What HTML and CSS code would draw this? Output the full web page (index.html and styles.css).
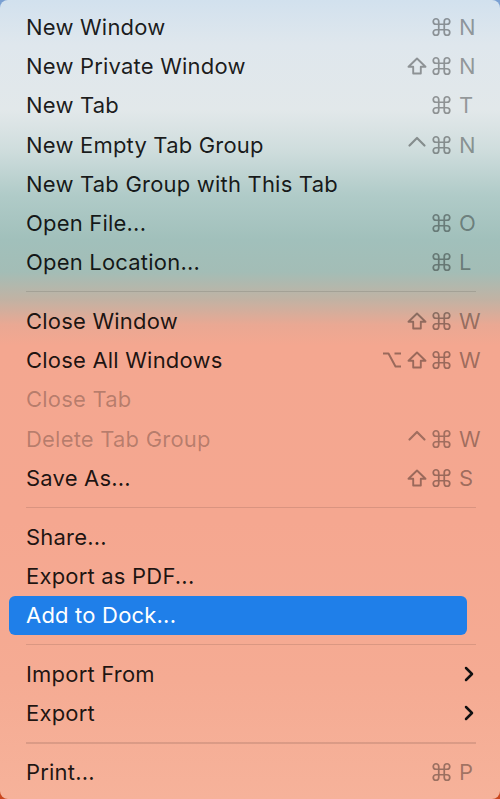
FILE: index.html
```html
<!DOCTYPE html>
<html lang="en">
<head>
<meta charset="utf-8">
<title>File menu</title>
<link rel="stylesheet" href="styles.css">
</head>
<body>
<svg width="0" height="0" class="defs">
  <defs>
    <symbol id="cmd" viewBox="0 0 24 24"><path d="M15 6v12a3 3 0 1 0 3-3H6a3 3 0 1 0 3 3V6a3 3 0 1 0-3 3h12a3 3 0 1 0-3-3" fill="none" stroke="currentColor" stroke-width="1.9" stroke-linejoin="round"/></symbol>
    <symbol id="shift" viewBox="0 0 20 18"><path d="M10 1.5 L18.5 9.8 H13.8 V16.5 H6.2 V9.8 H1.5 Z" fill="none" stroke="currentColor" stroke-width="1.9" stroke-linejoin="round"/></symbol>
    <symbol id="ctrl" viewBox="0 0 20 18"><path d="M2.5 9.5 L10 2 L17.5 9.5" fill="none" stroke="currentColor" stroke-width="2.2" stroke-linecap="round" stroke-linejoin="round"/></symbol>
    <symbol id="opt" viewBox="0 0 20 18"><path d="M1 2.5 H6.5 L13.5 15.5 H19 M12.5 2.5 H19" fill="none" stroke="currentColor" stroke-width="2" stroke-linejoin="round"/></symbol>
  </defs>
</svg>
<div class="menu">
  <div class="item"><span class="label">New Window</span><span class="sc"><span class="mod"><svg class="cm"><use href="#cmd"/></svg></span><span class="key">N</span></span></div>
  <div class="item"><span class="label">New Private Window</span><span class="sc"><span class="mod"><svg class="sh"><use href="#shift"/></svg></span><span class="mod"><svg class="cm"><use href="#cmd"/></svg></span><span class="key">N</span></span></div>
  <div class="item"><span class="label">New Tab</span><span class="sc"><span class="mod"><svg class="cm"><use href="#cmd"/></svg></span><span class="key">T</span></span></div>
  <div class="item"><span class="label">New Empty Tab Group</span><span class="sc"><span class="mod"><svg class="sh"><use href="#ctrl"/></svg></span><span class="mod"><svg class="cm"><use href="#cmd"/></svg></span><span class="key">N</span></span></div>
  <div class="item"><span class="label">New Tab Group with This Tab</span></div>
  <div class="item"><span class="label">Open File...</span><span class="sc"><span class="mod"><svg class="cm"><use href="#cmd"/></svg></span><span class="key">O</span></span></div>
  <div class="item"><span class="label">Open Location...</span><span class="sc"><span class="mod"><svg class="cm"><use href="#cmd"/></svg></span><span class="key">L</span></span></div>
  <div class="sep"></div>
  <div class="item"><span class="label">Close Window</span><span class="sc"><span class="mod"><svg class="sh"><use href="#shift"/></svg></span><span class="mod"><svg class="cm"><use href="#cmd"/></svg></span><span class="key">W</span></span></div>
  <div class="item"><span class="label">Close All Windows</span><span class="sc"><span class="mod"><svg class="sh"><use href="#opt"/></svg></span><span class="mod"><svg class="sh"><use href="#shift"/></svg></span><span class="mod"><svg class="cm"><use href="#cmd"/></svg></span><span class="key">W</span></span></div>
  <div class="item disabled"><span class="label">Close Tab</span></div>
  <div class="item disabled"><span class="label">Delete Tab Group</span><span class="sc"><span class="mod"><svg class="sh"><use href="#ctrl"/></svg></span><span class="mod"><svg class="cm"><use href="#cmd"/></svg></span><span class="key">W</span></span></div>
  <div class="item"><span class="label">Save As...</span><span class="sc"><span class="mod"><svg class="sh"><use href="#shift"/></svg></span><span class="mod"><svg class="cm"><use href="#cmd"/></svg></span><span class="key">S</span></span></div>
  <div class="sep"></div>
  <div class="item"><span class="label">Share...</span></div>
  <div class="item"><span class="label">Export as PDF...</span></div>
  <div class="item active"><span class="label">Add to Dock...</span></div>
  <div class="sep"></div>
  <div class="item"><span class="label">Import From</span><span class="sc"><svg class="chev" width="10" height="16" viewBox="0 0 10 16"><polyline points="2,2 8,8 2,14" fill="none" stroke="#111" stroke-width="2.5" stroke-linecap="round" stroke-linejoin="round"/></svg></span></div>
  <div class="item"><span class="label">Export</span><span class="sc"><svg class="chev" width="10" height="16" viewBox="0 0 10 16"><polyline points="2,2 8,8 2,14" fill="none" stroke="#111" stroke-width="2.5" stroke-linecap="round" stroke-linejoin="round"/></svg></span></div>
  <div class="sep"></div>
  <div class="item"><span class="label">Print...</span><span class="sc"><span class="mod"><svg class="cm"><use href="#cmd"/></svg></span><span class="key">P</span></span></div>
</div>
</body>
</html>
```
FILE: styles.css
```css
html, body {
  margin: 0;
  padding: 0;
}
body {
  width: 500px;
  height: 799px;
  background: linear-gradient(to bottom, #7aa0d2 0%, #9ab6c8 40%, #d86a44 60%, #c9471f 100%);
  font-family: "Inter", "Liberation Sans", sans-serif;
  overflow: hidden;
}
.defs {
  position: absolute;
  width: 0;
  height: 0;
}
.menu {
  box-sizing: border-box;
  width: 500px;
  height: 799px;
  border-radius: 8px;
  padding-top: 7.4px;
  background: linear-gradient(to bottom,
    #d2e1ee 0px,
    #dfe7ed 45px,
    #e2e8ea 110px,
    #cfdddd 150px,
    #b0cbc8 195px,
    #a1c0bb 240px,
    #a3bdb6 272px,
    #c2b2a3 300px,
    #eaa893 325px,
    #f4a790 345px,
    #f5a790 520px,
    #f5ab93 680px,
    #f6b29a 799px);
}
.item {
  position: relative;
  display: flex;
  align-items: center;
  height: 39.2px;
  margin: 0 13px 0 9px;
  padding-left: 17px;
  font-size: 22px;
  color: rgba(0, 0, 0, 0.88);
  letter-spacing: 0.2px;
}
.item .label {
  flex: 1;
  white-space: nowrap;
}
.item.disabled {
  color: rgba(0, 0, 0, 0.26);
}
.item.active {
  color: #fff;
}
.item.active::before {
  content: "";
  position: absolute;
  left: 0;
  top: 0;
  bottom: 0;
  right: 20px;
  background: #1f7fe9;
  border-radius: 6px;
  z-index: 0;
}
.item.active .label {
  position: relative;
  z-index: 1;
}
.sc {
  display: flex;
  align-items: center;
  color: rgba(0, 0, 0, 0.37);
}
.item.disabled .sc {
  color: rgba(0, 0, 0, 0.34);
}
.mod {
  width: 25px;
  height: 39px;
  display: flex;
  align-items: center;
  justify-content: center;
}
.mod svg {
  display: block;
}
.mod svg.cm {
  width: 23px;
  height: 22px;
}
.mod svg.sh {
  width: 20px;
  height: 18px;
}
.key {
  width: 28px;
  margin-left: 5px;
  text-align: left;
  font-size: 22px;
  letter-spacing: 0;
}
.chev {
  display: block;
  margin-right: 13px;
}
.sep {
  height: 19.8px;
  display: flex;
  align-items: center;
  margin: 0 24px 0 26px;
}
.sep::before {
  content: "";
  display: block;
  width: 100%;
  height: 1.5px;
  background: rgba(0, 0, 0, 0.11);
}
```
